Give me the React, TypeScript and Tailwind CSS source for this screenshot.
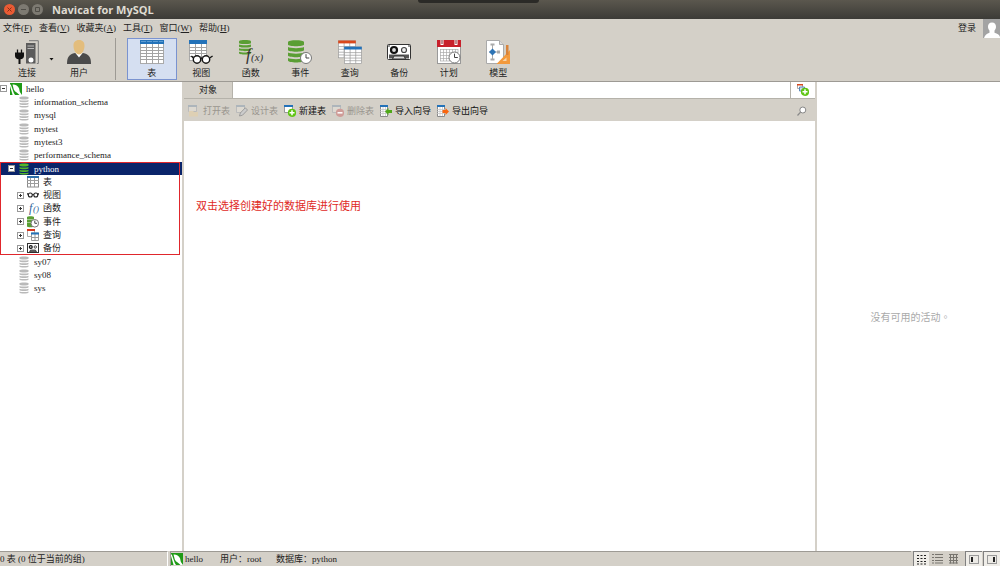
import { useState } from 'react';
import type { ReactNode } from 'react';
import clsx from 'clsx';

interface IconProps {
  className?: string;
}

function NavicatIcon({ className }: IconProps) {
  return (
    <svg viewBox="0 0 12 12" className={className}>
      <rect width="12" height="12" fill="#1f9a17" />
      <path d="M2.500 1.500C5 1.200 8 2.600 9 5.200c.6 1.600.4 3 1.200 4.300L12 12H9.500C7.500 9.800 5 9.200 3.800 6.600 3.200 5 3.100 3.200 2.500 1.500z" fill="#fff" />
      <path d="M0 1.500h.8L3.800 10 5 12H0z" fill="#fff" />
      <path d="M0 3l2.600 9H0z" fill="#1f9a17" />
    </svg>
  );
}

function DbIcon({ className }: IconProps) {
  return (
    <svg viewBox="0 0 12 12" className={className} fill="currentColor">
      <path d="M1.500 1.500c0-1.300 9-1.300 9 0v1c0 1.300-9 1.300-9 0z" />
      <path d="M1.500 4c1 .8 8 .8 9 0v1.200c0 1.300-9 1.300-9 0z" />
      <path d="M1.500 6.700c1 .8 8 .8 9 0v1.200c0 1.300-9 1.300-9 0z" />
      <path d="M1.500 9.400c1 .8 8 .8 9 0v1c0 1.400-9 1.400-9 0z" />
    </svg>
  );
}

/* Small grid with a coloured header, reused by several icons */
function Sheet({ x, y, w, h, head = '#2372b9', line = '#9a9a9a' }: { x: number; y: number; w: number; h: number; head?: string; line?: string }) {
  const rows = [0.34, 0.5, 0.67, 0.83];
  const cols = [0.33, 0.66];
  return (
    <g>
      <rect x={x} y={y} width={w} height={h} fill="#fff" stroke={line} strokeWidth=".7" />
      {rows.map((r) => (
        <path key={r} d={`M${x} ${y + h * r}h${w}`} stroke={line} strokeWidth=".7" />
      ))}
      {cols.map((c) => (
        <path key={c} d={`M${x + w * c} ${y}v${h}`} stroke={line} strokeWidth=".7" />
      ))}
      <rect x={x - 0.3} y={y - 0.3} width={w + 0.6} height={h * 0.17} fill={head} />
    </g>
  );
}

function ConnectIcon({ className }: IconProps) {
  return (
    <svg viewBox="0 0 24 24" className={className}>
      <path d="M14 .7h9.300v22.800h-1.500" fill="none" stroke="#777" strokeWidth="1" />
      <rect x="11" y="3" width="9.500" height="20.500" fill="#5b5b5b" />
      <path d="M12.500 6h6.500M12.500 8.500h6.500" stroke="#bbb" />
      <circle cx="16" cy="20" r="2.500" fill="#fff" />
      <path d="M2.500 9.500v4M6.500 9.500v4" stroke="#111" strokeWidth="1.300" />
      <path d="M0 12.500h9v3.500c0 2-1.500 3-3.500 3.300V24h-2v-4.700C1.500 19 0 18 0 16z" fill="#111" />
    </svg>
  );
}

function UserIcon({ className }: IconProps) {
  return (
    <svg viewBox="0 0 24 24" className={className}>
      <path d="M0 24c0-7 2-9.500 8-11h8c6 1.500 8 4 8 11z" fill="#4a4a4a" />
      <path d="M8 12.500l4 5 4-5z" fill="#fff" />
      <path d="M12 0c3.800 0 5.700 2.500 5.500 6-.2 4.500-2.500 8.500-5.500 8.500S6.700 10.500 6.500 6C6.300 2.500 8.200 0 12 0z" fill="#e3bd7c" />
    </svg>
  );
}

function TableIcon({ className }: IconProps) {
  return (
    <svg viewBox="0 0 24 24" className={className}>
      <rect x=".5" y=".5" width="23" height="23" fill="#fff" stroke="#aaa" />
      <path d="M0 7.500h24M0 10.500h24M0 13.500h24M0 16.500h24M0 19.500h24M6.500 4v20M12.500 4v20M18.500 4v20" stroke="#a3a3a3" />
      <rect width="24" height="4" fill="#2372b9" />
      <path d="M1 1.500h22" stroke="#5d9bd0" strokeDasharray="5 1" />
    </svg>
  );
}

function ViewIcon({ className }: IconProps) {
  return (
    <svg viewBox="0 0 24 24" className={className}>
      <rect x=".5" y=".5" width="17" height="20" fill="#fff" stroke="#aaa" />
      <path d="M0 7.500h18M0 10.500h18M0 13.500h18M0 16.500h18M6.500 4v16M12.500 4v16" stroke="#a3a3a3" />
      <rect width="18" height="4" fill="#2372b9" />
      <g fill="#fff" stroke="#151515" strokeWidth="1.400">
        <circle cx="8" cy="19.500" r="3.700" />
        <circle cx="17" cy="19.500" r="3.700" />
        <path d="M11.500 18.500q1-1 2 0M4.400 18l-2-2M20.600 18l3-2" fill="none" />
      </g>
    </svg>
  );
}

function Cylinder() {
  return (
    <g fill="#5a9e34">
      <path d="M0 2c0-2.500 16-2.500 16 0v2.500c0 2.300-16 2.300-16 0z" />
      <path d="M0 7c2 1.500 14 1.500 16 0v3c0 2.300-16 2.300-16 0z" />
      <path d="M0 12.500c2 1.500 14 1.500 16 0v3c0 2.300-16 2.300-16 0z" />
      <path d="M0 18c2 1.500 14 1.500 16 0v2.500c0 2.600-16 2.600-16 0z" />
    </g>
  );
}

function FunctionIcon({ className }: IconProps) {
  return (
    <svg viewBox="0 0 24 24" className={clsx(className, 'overflow-visible')}>
      <g transform="scale(.75 .65)">
        <Cylinder />
      </g>
      <text x="7" y="20" fontSize="17" fontStyle="italic" fill="#333">f</text>
      <text x="12" y="21" fontSize="11" fontStyle="italic" fill="#333">(x)</text>
    </svg>
  );
}

function Clock({ cx, cy, r }: { cx: number; cy: number; r: number }) {
  return (
    <g>
      <circle cx={cx} cy={cy} r={r} fill="#fff" stroke="#777" />
      <path d={`M${cx} ${cy - r * 0.7}V${cy}h${r * 0.6}`} fill="none" stroke="#444" />
    </g>
  );
}

function EventIcon({ className }: IconProps) {
  return (
    <svg viewBox="0 0 24 24" className={className}>
      <Cylinder />
      <Clock cx={18} cy={18} r={5.5} />
    </svg>
  );
}

function QueryIcon({ className }: IconProps) {
  return (
    <svg viewBox="0 0 24 24" className={className}>
      <Sheet x={0.5} y={0.8} w={17} h={17} head="#d9481c" />
      <Sheet x={6.5} y={7} w={17} h={16.5} />
    </svg>
  );
}

function BackupIcon({ className }: IconProps) {
  return (
    <svg viewBox="0 0 24 24" className={className}>
      <rect x=".5" y="4.500" width="23" height="15" rx="1" fill="#fff" stroke="#333" />
      <path d="M2 14.500h20v4H2z" fill="#555" />
      <path d="M5.500 19l1.500-3h10l1.500 3z" fill="#ddd" stroke="#333" />
      <circle cx="7" cy="10" r="3" fill="#ddd" stroke="#111" strokeWidth="2.200" />
      <circle cx="17" cy="10" r="2.500" fill="#eee" stroke="#444" strokeWidth="1.200" />
      <path d="M2 5v2M22 5v2" stroke="#333" />
    </svg>
  );
}

function PlanIcon({ className }: IconProps) {
  return (
    <svg viewBox="0 0 24 24" className={className}>
      <rect x=".5" y="1.500" width="23" height="22" fill="#fff" stroke="#999" />
      <path d="M3 9.500h18M3 12.500h18M3 15.500h18M3 18.500h12M3 21h10M3.500 9v12M6.500 9v12M9.500 9v12M12.500 9v12M15.500 9v6M18.500 9v4M21 9v4" stroke="#aaa" strokeWidth=".7" />
      <rect width="24" height="7" fill="#c8202b" />
      <path d="M5 0v5M19 0v5" stroke="#fff" strokeWidth="3" />
      <path d="M5 0v4M19 0v4" stroke="#7c1820" />
      <Clock cx={17.5} cy={17.5} r={5.5} />
    </svg>
  );
}

function ModelIcon({ className }: IconProps) {
  return (
    <svg viewBox="0 0 24 24" className={className}>
      <path d="M.5.5h13l4 4v19H.5z" fill="#fff" stroke="#aaa" />
      <path d="M13.500.5v4h4" fill="#ddd" stroke="#aaa" />
      <path d="M6.500 5v14M3 12h9" stroke="#aaa" />
      <path d="M4.500 3.500h4v2h-4zM4.500 18.500h4v2h-4zM11 10.500h3v3h-3z" fill="#aaa" />
      <path d="M6.500 8.500l3.500 3.500-3.500 3.500L3 12z" fill="#2f75b5" />
      <path d="M24 10v14H10.500z" fill="#f39a3d" />
      <path d="M20.500 17.500v3.500h-4z" fill="#f7d5ae" />
      <path d="M20 5h2.500v10H20z" fill="#d8833b" />
    </svg>
  );
}

function TreeTableIcon({ className }: IconProps) {
  return (
    <svg viewBox="0 0 12 12" className={className}>
      <rect x=".5" y=".5" width="11" height="10.500" fill="#fff" stroke="#8a8a8a" />
      <path d="M0 4.500h12M0 7.500h12M3.500 2v9M7.500 2v9" stroke="#9c9c9c" />
      <path d="M0 0h12v2H0z" fill="#2f6fa9" />
    </svg>
  );
}

function TreeViewIcon({ className }: IconProps) {
  return (
    <svg viewBox="0 0 12 12" className={className} fill="none" stroke="#222" strokeWidth="1.100">
      <circle cx="3.300" cy="6" r="2" />
      <circle cx="8.800" cy="6" r="2" />
      <path d="M5.300 5.500h1.500M1.400 5.500L0 4.500M10.700 5.500l1.300-1" />
    </svg>
  );
}

function TreeFunctionIcon({ className }: IconProps) {
  return (
    <svg viewBox="0 0 12 12" className={clsx(className, 'overflow-visible')}>
      <text x="2" y="9.500" fontSize="12" fontStyle="italic" fill="#2c5f9b">f</text>
      <text x="6" y="10" fontSize="9" fontStyle="italic" fill="#2c5f9b">()</text>
    </svg>
  );
}

function TreeEventIcon({ className }: IconProps) {
  return (
    <svg viewBox="0 0 12 12" className={className}>
      <path d="M0 1c0-1 7-1 7 0v9.500c0 1-7 1-7 0z" fill="#5a9e34" />
      <path d="M0 3.500h7M0 6.500h7" stroke="#d5e8ca" strokeWidth=".6" />
      <Clock cx={7.8} cy={7.3} r={3.8} />
    </svg>
  );
}

function TreeQueryIcon({ className }: IconProps) {
  return (
    <svg viewBox="0 0 12 12" className={className}>
      <path d="M.5.5h7v7h-7z" fill="#fff" stroke="#aaa" />
      <path d="M0 0h8v2H0z" fill="#d9351c" />
      <path d="M4.500 4h7v7.500h-7z" fill="#fff" stroke="#999" />
      <path d="M4 8.500h8M8 5v6" stroke="#999" />
      <path d="M4 3.500h8v2H4z" fill="#2372b9" />
    </svg>
  );
}

function TreeBackupIcon({ className }: IconProps) {
  return (
    <svg viewBox="0 0 12 12" className={className}>
      <rect x=".5" y="1.500" width="11" height="9" fill="#fff" stroke="#333" />
      <circle cx="3.800" cy="5" r="1.400" fill="#fff" stroke="#111" strokeWidth="1.300" />
      <circle cx="8.300" cy="5" r="1.200" fill="#fff" stroke="#333" strokeWidth=".9" />
      <path d="M2.500 10l1-2h5l1 2z" fill="#777" stroke="#222" strokeWidth=".7" />
    </svg>
  );
}

function PlusBadge({ minus = false }: { minus?: boolean }) {
  return (
    <g>
      <circle cx="8" cy="7.800" r="4.100" fill={minus ? '#cf9c98' : '#5fc413'} />
      <path d={minus ? 'M5.500 7.800h5' : 'M5.500 7.800h5M8 5.300v5'} stroke="#fff" strokeWidth="1.500" />
    </g>
  );
}

function NewTableIcon({ className }: IconProps) {
  return (
    <svg viewBox="0 0 12 12" className={className}>
      <path d="M.5.5h8v7h-8z" fill="#fff" stroke="#999" />
      <path d="M0 0h9v2H0z" fill="#2372b9" />
      <PlusBadge />
    </svg>
  );
}

function DeleteTableIcon({ className }: IconProps) {
  return (
    <svg viewBox="0 0 12 12" className={className}>
      <path d="M.5.5h8v7h-8z" fill="#ddd9d1" stroke="#bbb" />
      <path d="M0 0h9v2H0z" fill="#adb5bb" />
      <PlusBadge minus />
    </svg>
  );
}

function OpenTableIcon({ className }: IconProps) {
  return (
    <svg viewBox="0 0 12 12" className={className}>
      <path d="M.5.5h8v6h-8z" fill="#ddd9d1" stroke="#bbb" />
      <path d="M0 0h9v2H0z" fill="#adb5bb" />
      <path d="M1 6h4l1 1h4v4.500H1z" fill="#ded0b4" />
    </svg>
  );
}

function DesignTableIcon({ className }: IconProps) {
  return (
    <svg viewBox="0 0 12 12" className={className}>
      <path d="M.5.5h8v7h-8z" fill="#ddd9d1" stroke="#bbb" />
      <path d="M0 0h9v2H0z" fill="#adb5bb" />
      <path d="M3.500 11l.8-3 5-5.200 2.200 2.200-5 5.200z" fill="#ccc" stroke="#8f8f8f" strokeWidth=".8" />
    </svg>
  );
}

/* Narrow table with an arrow pointing in or out */
function TransferIcon({ className, out = false }: IconProps & { out?: boolean }) {
  return (
    <svg viewBox="0 0 12 12" className={className}>
      <path d="M.5.5h7v11h-7z" fill="#fff" stroke="#8a8a8a" />
      <path d="M0 4.500h8M0 6.500h8M0 8.500h8M3 2v9M5.500 2v9" stroke="#c2c2c2" strokeWidth=".7" />
      <path d="M0 0h8v2H0z" fill="#2372b9" />
      <path d={out ? 'M12 6.500L8.500 3v2H5.500v3h3v2z' : 'M5 6.500L8.500 3v2H12v3H8.500v2z'} fill={out ? '#f9660f' : '#4fa818'} />
    </svg>
  );
}

function ImportIcon({ className }: IconProps) {
  return <TransferIcon className={className} />;
}

function ExportIcon({ className }: IconProps) {
  return <TransferIcon className={className} out />;
}

type Icon = (props: IconProps) => ReactNode;

const windowButtons = [
  { label: 'Close', glyph: 'M3.500 3.500l4 4M7.500 3.500l-4 4', className: 'bg-[#ea5b34] text-[#8a2f14]' },
  { label: 'Minimize', glyph: 'M3 5.500h5', className: 'bg-[#7d7a72] text-[#504e48]' },
  { label: 'Maximize', glyph: 'M3.500 3.500h4v4h-4z', className: 'bg-[#7d7a72] text-[#504e48]' },
];

const menus = [
  { label: '文件', key: 'F' },
  { label: '查看', key: 'V' },
  { label: '收藏夹', key: 'A' },
  { label: '工具', key: 'T' },
  { label: '窗口', key: 'W' },
  { label: '帮助', key: 'H' },
];

const objectTypes: { label: string; icon: Icon }[] = [
  { label: '表', icon: TableIcon },
  { label: '视图', icon: ViewIcon },
  { label: '函数', icon: FunctionIcon },
  { label: '事件', icon: EventIcon },
  { label: '查询', icon: QueryIcon },
  { label: '备份', icon: BackupIcon },
  { label: '计划', icon: PlanIcon },
  { label: '模型', icon: ModelIcon },
];

const actions: { label: string; icon: Icon; disabled?: boolean }[] = [
  { label: '打开表', icon: OpenTableIcon, disabled: true },
  { label: '设计表', icon: DesignTableIcon, disabled: true },
  { label: '新建表', icon: NewTableIcon },
  { label: '删除表', icon: DeleteTableIcon, disabled: true },
  { label: '导入向导', icon: ImportIcon },
  { label: '导出向导', icon: ExportIcon },
];

interface TreeNode {
  label: string;
  level: 0 | 1 | 2;
  icon: Icon;
  toggle?: 'open' | 'closed';
}

const tree: TreeNode[] = [
  { label: 'hello', level: 0, icon: NavicatIcon, toggle: 'open' },
  { label: 'information_schema', level: 1, icon: DbIcon },
  { label: 'mysql', level: 1, icon: DbIcon },
  { label: 'mytest', level: 1, icon: DbIcon },
  { label: 'mytest3', level: 1, icon: DbIcon },
  { label: 'performance_schema', level: 1, icon: DbIcon },
  { label: 'python', level: 1, icon: DbIcon, toggle: 'open' },
  { label: '表', level: 2, icon: TreeTableIcon },
  { label: '视图', level: 2, icon: TreeViewIcon, toggle: 'closed' },
  { label: '函数', level: 2, icon: TreeFunctionIcon, toggle: 'closed' },
  { label: '事件', level: 2, icon: TreeEventIcon, toggle: 'closed' },
  { label: '查询', level: 2, icon: TreeQueryIcon, toggle: 'closed' },
  { label: '备份', level: 2, icon: TreeBackupIcon, toggle: 'closed' },
  { label: 'sy07', level: 1, icon: DbIcon },
  { label: 'sy08', level: 1, icon: DbIcon },
  { label: 'sys', level: 1, icon: DbIcon },
];

const indent = { 0: 'pl-0', 1: 'pl-2', 2: 'pl-[17px]' };

function ToolButton({ label, icon: IconView, active, onClick }: { label: string; icon: Icon; active?: boolean; onClick?: () => void }) {
  return (
    <button
      onClick={onClick}
      className={clsx(
        'flex flex-col items-center gap-[3px] border pt-px',
        active ? 'border-[#7a93d0] bg-[#d5dff1]' : 'border-transparent'
      )}
    >
      <IconView className="h-6 w-6" />
      <span className="leading-3">{label}</span>
    </button>
  );
}

function TreeRow({ node, selected, onSelect }: { node: TreeNode; selected: boolean; onSelect: () => void }) {
  const IconView = node.icon;
  return (
    <li className="min-h-0">
      <button
        onClick={onSelect}
        className={clsx(
          'flex h-full w-full items-center text-left leading-3',
          indent[node.level],
          selected ? 'bg-[#0a246a] text-white' : 'text-[#222]'
        )}
      >
        <svg viewBox="0 0 7 7" className="mr-[3px] h-[7px] w-[7px] shrink-0">
          {node.toggle && (
            <>
              <rect x=".5" y=".5" width="6" height="6" fill="#fff" stroke="#999" />
              <path d={node.toggle === 'open' ? 'M2 3.500h3' : 'M2 3.500h3M3.500 2v3'} stroke="#333" />
            </>
          )}
        </svg>
        <IconView className={clsx('mr-1 h-3 w-3 shrink-0', selected ? 'text-[#55b52a]' : 'text-[#b9b9b9]')} />
        {node.label}
      </button>
    </li>
  );
}

export default function App() {
  const [objectType, setObjectType] = useState('表');
  const [selected, setSelected] = useState('python');
  const [viewMode, setViewMode] = useState('list');

  return (
    <div className="flex h-screen flex-col overflow-hidden bg-[#d4d0c8] font-['Liberation_Serif','Noto_Sans_CJK_SC',serif] text-[9px] text-[#222]">
      {/* Title bar */}
      <header className="relative flex h-[19px] shrink-0 items-center gap-[3px] bg-linear-to-b from-[#5b574e] to-[#3c3b37] pl-1">
        {windowButtons.map((b) => (
          <button key={b.label} aria-label={b.label} className={clsx('h-[11px] w-[11px] rounded-full', b.className)}>
            <svg viewBox="0 0 11 11" className="h-full w-full" fill="none" stroke="currentColor">
              <path d={b.glyph} />
            </svg>
          </button>
        ))}
        <h1 className="ml-[6px] font-['Open_Sans',sans-serif] text-[11px] leading-4 font-bold text-[#dfdbd2]">Navicat for MySQL</h1>
        <div className="absolute top-0 left-[418px] h-[3px] w-[121px] rounded-b-sm bg-[#2b2a27]" />
      </header>

      {/* Menu bar */}
      <nav className="flex h-[19px] shrink-0 items-center gap-[7px] pl-[3px]">
        {menus.map((m) => (
          <button key={m.key}>
            {m.label}(<span className="underline">{m.key}</span>)
          </button>
        ))}
        <button className="ml-auto">登录</button>
        <svg viewBox="0 0 17 19" className="h-[19px] w-[17px]">
          <rect width="17" height="19" fill="#a3a3a3" />
          <path d="M9 3.500c2.600 0 4.200 1.800 4 4.500-.1 1.700-.8 2.800-1.500 3.500v2.300c3 .8 4.500 1.700 5.500 4.200v1H1c1-3.200 3-4.400 5.500-5.200v-2.300C5.800 10.800 5.100 9.700 5 8c-.2-2.700 1.400-4.500 4-4.500z" fill="#fff" />
        </svg>
      </nav>

      {/* Main toolbar */}
      <div className="flex shrink-0 items-stretch border-b border-[#9d9a94] pb-px">
        <div className="flex w-[127px] items-stretch pl-[14px]">
          <ToolButton label="连接" icon={ConnectIcon} />
          <button aria-label="连接选项" className="ml-[9px] self-center">
            <svg viewBox="0 0 5 3" className="h-[3px] w-[5px]">
              <path d="M.5 0h4l-2 2.500z" fill="#111" />
            </svg>
          </button>
          <div className="ml-3 flex">
            <ToolButton label="用户" icon={UserIcon} />
          </div>
          <div className="ml-[23px] w-px bg-[#9d9a94]" />
        </div>
        <div className="grid w-[396px] grid-cols-8">
          {objectTypes.map((t) => (
            <ToolButton key={t.label} {...t} active={objectType === t.label} onClick={() => setObjectType(t.label)} />
          ))}
        </div>
      </div>

      <div className="flex min-h-0 flex-1 bg-white">
        {/* Connection tree */}
        <aside className="w-[182px] shrink-0">
          <ul className="relative grid h-[213px] auto-rows-fr">
            {tree.map((node) => (
              <TreeRow key={node.label} node={node} selected={selected === node.label} onSelect={() => setSelected(node.label)} />
            ))}
            <li aria-hidden className="pointer-events-none absolute inset-0 right-[2px] row-start-7 row-end-14 border border-[#e0262c]" />
          </ul>
        </aside>

        <main className="flex min-w-0 flex-1 flex-col border-x-2 border-[#d4d0c8]">
          <div className="flex h-4 shrink-0">
            <button className="w-[49px] border-r border-[#b5b2aa] bg-[#d4d0c8] pt-px">对象</button>
            <div className="flex-1" />
            <button aria-label="新建选项卡" className="flex w-[25px] items-center justify-center border-l border-[#b5b2aa]">
              <svg viewBox="0 0 12 12" className="h-3 w-3">
                <path d="M.5.5h5v4h-5z" fill="#fff" stroke="#aaa" />
                <path d="M0 0h6v1.500H0z" fill="#d9481c" />
                <path d="M2.500 3h5v4h-5z" fill="#cfdbe9" stroke="#5c88b8" />
                <PlusBadge />
              </svg>
            </button>
          </div>
          <div className="flex h-[23px] shrink-0 items-center gap-[6px] border-t border-[#b5b2aa] bg-[#d4d0c8] pt-[2px] pr-2 pl-1">
            {actions.map(({ label, icon: IconView, disabled }) => (
              <button key={label} disabled={disabled} className={clsx('flex items-center gap-[3px] leading-3', disabled ? 'text-[#99958e]' : 'text-[#111]')}>
                <IconView className="h-3 w-3" />
                {label}
              </button>
            ))}
            <button aria-label="搜索" className="ml-auto">
              <svg viewBox="0 0 10 10" className="h-[10px] w-[10px]">
                <circle cx="5.800" cy="4" r="3" fill="#fff" stroke="#888" />
                <path d="M3.600 6.200L.5 9.500" stroke="#888" strokeWidth="1.200" />
              </svg>
            </button>
          </div>
          <div className="flex-1 pt-[76px] pl-3">
            <p className="font-['Noto_Sans_CJK_SC',sans-serif] text-[11px] leading-4 text-[#e02a26]">双击选择创建好的数据库进行使用</p>
          </div>
        </main>

        {/* Activity pane */}
        <aside className="flex w-[183px] shrink-0 items-center justify-center pl-1">
          <p className="font-['Noto_Sans_CJK_TC',sans-serif] text-[10px] text-[#aaa]">没有可用的活动。</p>
        </aside>
      </div>

      {/* Status bar */}
      <footer className="flex h-[15px] shrink-0 items-stretch gap-[2px] leading-[14px]">
        <div className="w-[168px] border-t border-r border-t-[#9d9a94] border-r-white">0 表 (0 位于当前的组)</div>
        <div className="flex flex-1 items-center border-t border-l border-[#9d9a94]">
          <NavicatIcon className="mr-[2px] h-3 w-3" />
          <span className="w-[35px]">hello</span>
          <span className="w-14">用户：root</span>
          <span>数据库：python</span>
        </div>
        <div className="flex">
          {[
            { id: 'list', path: 'M1 1.500h2M4.500 1.500h2M8 1.500h2M1 4.500h2M4.500 4.500h2M8 4.500h2M1 7.500h2M4.500 7.500h2M8 7.500h2M1 10h2M4.500 10h2M8 10h2' },
            { id: 'detail', path: 'M0 1.500h2M3 1.500h8M0 4.500h2M3 4.500h8M0 7.500h2M3 7.500h8M0 10h2M3 10h8' },
            { id: 'er', path: 'M1 1.500h9M1 4.500h9M1 7.500h9M1 10h9M2.500 1v9.500M5.500 1v9.500M8.500 1v9.500' },
          ].map((v) => (
            <button
              key={v.id}
              aria-label={v.id}
              onClick={() => setViewMode(v.id)}
              className={clsx('flex w-4 items-center justify-center', viewMode === v.id ? 'border-t border-l border-[#808080] bg-[#efede8] text-[#222]' : 'text-[#77746e]')}
            >
              <svg viewBox="0 0 11 11" className="h-[11px] w-[11px]" stroke="currentColor">
                <path d={v.path} />
              </svg>
            </button>
          ))}
        </div>
        <div className="ml-[2px] flex gap-px">
          {['left', 'right'].map((side) => (
            <button key={side} aria-label={side} className="flex w-[17px] items-center justify-center border-t border-l border-[#808080] bg-[#efede8]">
              <svg viewBox="0 0 10 9" className="h-[9px] w-[10px]">
                <rect x=".5" y=".5" width="9" height="8" fill="#eceae5" stroke="#999" />
                <rect x={side === 'left' ? 2 : 6} y="2" width="2" height="5" fill="#222" />
              </svg>
            </button>
          ))}
        </div>
      </footer>
    </div>
  );
}
